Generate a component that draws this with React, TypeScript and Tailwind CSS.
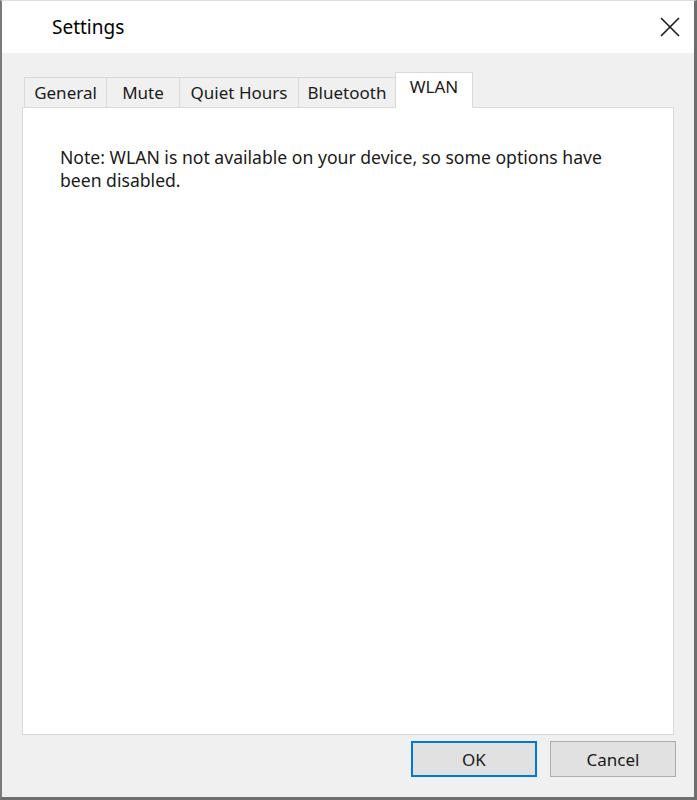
import React from "react";

const tabs = [
  { label: "General", w: "w-[82px]" },
  { label: "Mute", w: "w-[73px]" },
  { label: "Quiet Hours", w: "w-[119px]" },
  { label: "Bluetooth", w: "w-[97px]" },
];

const App: React.FC = () => {
  return (
    <div
      className="w-[697px] h-[800px] flex flex-col bg-[#f0f0f0] border-l-2 border-r-[3px] border-b-[3px] border-t border-l-[#7a7a7a] border-r-[#6e6e6e] border-b-[#6e6e6e] border-t-[#dcdcdc] text-[#1a1a1a]"
      style={{ fontFamily: '"Noto Sans", "Open Sans", sans-serif' }}
    >
      {/* Title bar */}
      <div className="h-[52px] bg-white flex items-center justify-between pl-[50px] pr-[14px]">
        <span className="text-[19px] text-black">Settings</span>
        <svg width="20" height="20" viewBox="0 0 20 20">
          <path d="M1 1L19 19M19 1L1 19" stroke="#1a1a1a" strokeWidth="1.6" />
        </svg>
      </div>

      {/* Body */}
      <div className="flex-1 flex flex-col px-[20px] pt-[19px] pb-[20px]">
        {/* Tabs */}
        <div className="flex items-end h-[35px] pl-[2px] relative z-10">
          {tabs.map((t) => (
            <div
              key={t.label}
              className={`${t.w} h-[31px] -mb-px flex items-center justify-center border border-[#d9d9d9] border-r-0 bg-[#f0f0f0] text-[17px] leading-none pb-[1px]`}
            >
              {t.label}
            </div>
          ))}
          <div className="w-[78px] h-[36px] -mb-px flex items-start justify-center pt-[5px] bg-white border border-[#d9d9d9] border-b-white text-[17px] leading-none">
            WLAN
          </div>
        </div>

        {/* Panel */}
        <div className="w-[652px] flex-1 bg-white border border-[#d9d9d9] pl-[37px] pt-[38px] pr-[56px]">
          <p className="text-[17.6px] leading-[23px] text-[#1a1a1a]">
            Note: WLAN is not available on your device, so some options have been disabled.
          </p>
        </div>

        {/* Buttons */}
        <div className="flex justify-end gap-[13px] mt-[6px] -mr-[2px]">
          <button className="w-[126px] h-[36px] bg-[#e1e1e1] border-2 border-[#0078d7] text-[17px] leading-none">
            OK
          </button>
          <button className="w-[126px] h-[36px] bg-[#e1e1e1] border border-[#adadad] text-[17px] leading-none">
            Cancel
          </button>
        </div>
      </div>
    </div>
  );
};

export default App;
